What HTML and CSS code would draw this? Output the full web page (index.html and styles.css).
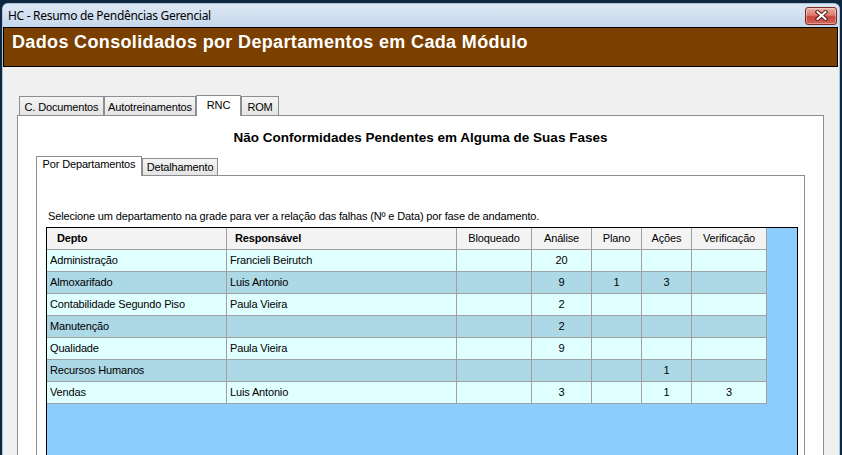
FILE: index.html
```html
<!DOCTYPE html>
<html lang="pt-BR">
<head>
<meta charset="utf-8">
<title>HC - Resumo de Pendências Gerencial</title>
<link rel="stylesheet" href="styles.css">
</head>
<body>
<div class="window">
  <header class="titlebar">
    <span class="caption">HC - Resumo de Pendências Gerencial</span>
    <span class="close-btn">
      <svg width="13" height="11" viewBox="0 0 13 11">
        <path d="M2.5 2 L10.5 9 M10.5 2 L2.5 9" stroke="#5a1d16" stroke-width="4" stroke-linecap="square" fill="none"/>
        <path d="M2.5 2 L10.5 9 M10.5 2 L2.5 9" stroke="#ffffff" stroke-width="2" stroke-linecap="square" fill="none"/>
      </svg>
    </span>
  </header>

  <div class="banner">Dados Consolidados por Departamentos em Cada Módulo</div>

  <main class="client">
    <nav class="tabstrip outer-strip">
      <span class="tab w-doc">C. Documentos</span>
      <span class="tab w-auto">Autotreinamentos</span>
      <span class="tab selected w-rnc">RNC</span>
      <span class="tab w-rom">ROM</span>
    </nav>

    <section class="tabpage outer-page">
      <h1 class="page-heading">Não Conformidades Pendentes em Alguma de Suas Fases</h1>

      <nav class="tabstrip inner-strip">
        <span class="tab selected w-dep">Por Departamentos</span>
        <span class="tab w-det">Detalhamento</span>
      </nav>

      <div class="tabpage inner-page">
        <p class="hint">Selecione um departamento na grade para ver a relação das falhas (Nº e Data) por fase de andamento.</p>

        <div class="grid">
          <div class="row head">
            <div class="cell left bold pad-depto">Depto</div>
            <div class="cell left bold pad-resp">Responsável</div>
            <div class="cell">Bloqueado</div>
            <div class="cell">Análise</div>
            <div class="cell">Plano</div>
            <div class="cell">Ações</div>
            <div class="cell">Verificação</div>
          </div>
          <div class="row odd">
            <div class="cell left">Administração</div>
            <div class="cell left">Francieli Beirutch</div>
            <div class="cell"></div>
            <div class="cell">20</div>
            <div class="cell"></div>
            <div class="cell"></div>
            <div class="cell"></div>
          </div>
          <div class="row even">
            <div class="cell left">Almoxarifado</div>
            <div class="cell left">Luis Antonio</div>
            <div class="cell"></div>
            <div class="cell">9</div>
            <div class="cell">1</div>
            <div class="cell">3</div>
            <div class="cell"></div>
          </div>
          <div class="row odd">
            <div class="cell left">Contabilidade Segundo Piso</div>
            <div class="cell left">Paula Vieira</div>
            <div class="cell"></div>
            <div class="cell">2</div>
            <div class="cell"></div>
            <div class="cell"></div>
            <div class="cell"></div>
          </div>
          <div class="row even">
            <div class="cell left">Manutenção</div>
            <div class="cell left"></div>
            <div class="cell"></div>
            <div class="cell">2</div>
            <div class="cell"></div>
            <div class="cell"></div>
            <div class="cell"></div>
          </div>
          <div class="row odd">
            <div class="cell left">Qualidade</div>
            <div class="cell left">Paula Vieira</div>
            <div class="cell"></div>
            <div class="cell">9</div>
            <div class="cell"></div>
            <div class="cell"></div>
            <div class="cell"></div>
          </div>
          <div class="row even">
            <div class="cell left">Recursos Humanos</div>
            <div class="cell left"></div>
            <div class="cell"></div>
            <div class="cell"></div>
            <div class="cell"></div>
            <div class="cell">1</div>
            <div class="cell"></div>
          </div>
          <div class="row odd">
            <div class="cell left">Vendas</div>
            <div class="cell left">Luis Antonio</div>
            <div class="cell"></div>
            <div class="cell">3</div>
            <div class="cell"></div>
            <div class="cell">1</div>
            <div class="cell">3</div>
          </div>
        </div>
      </div>
    </section>
  </main>
</div>
</body>
</html>
```

FILE: styles.css
```css
* {
  box-sizing: border-box;
}

html,
body {
  margin: 0;
  height: 100%;
  overflow: hidden;
}

body {
  background: #10283f;
  font-family: "Liberation Sans", Arial, sans-serif;
  font-size: 11px;
  letter-spacing: -0.15px;
  color: #000;
}

/* window frame */
.window {
  margin: 3px 2px 0 2px;
  height: 452px;
  border: 1px solid #a8c6e2;
  border-bottom: 0;
  border-radius: 6px 6px 0 0;
  background: #f0f0f0;
  display: flex;
  flex-direction: column;
  overflow: hidden;
}

.titlebar {
  flex: none;
  height: 23px;
  display: flex;
  align-items: center;
  justify-content: space-between;
  padding: 0 2px 0 5px;
  background: linear-gradient(#dde8f4, #c6d8ec);
}

.caption {
  font-family: "Noto Sans", "Open Sans", sans-serif;
  font-size: 12px;
  letter-spacing: -0.3px;
  line-height: 16px;
  color: #000;
}

.close-btn {
  width: 32px;
  height: 18px;
  display: flex;
  align-items: center;
  justify-content: center;
  border: 1px solid #7c2a22;
  border-radius: 3px;
  background: linear-gradient(#eab0a6 0%, #dc7a6c 45%, #c9443a 55%, #d2685a 100%);
  box-shadow: inset 0 0 0 1px rgba(255, 255, 255, 0.35);
}

/* brown banner under the caption */
.banner {
  flex: none;
  height: 40px;
  margin-right: 1px;
  padding: 4px 0 0 8px;
  background: #7b3f00;
  border: 1px solid #000;
  color: #fff;
  font-weight: bold;
  font-size: 18px;
  letter-spacing: 0.35px;
  line-height: 20px;
}

.client {
  flex: 1;
  padding: 28px 0 0 14px;
  display: flex;
  flex-direction: column;
  min-height: 0;
}

/* tabs */
.tabstrip {
  display: flex;
  align-items: flex-end;
  flex: none;
}

.tab {
  display: block;
  text-align: center;
  white-space: nowrap;
  border: 1px solid #8c8e94;
  border-bottom: 0;
  background: linear-gradient(#f4f4f4, #e4e4e4);
  color: #000;
}

.tab.selected {
  position: relative;
  z-index: 1;
  background: #fff;
  margin-bottom: -1px;
}

.outer-strip {
  height: 20px;
  padding-left: 2px;
}

.outer-strip .tab {
  height: 19px;
  line-height: 20px;
}

.outer-strip .tab.selected {
  height: 21px;
  line-height: 18px;
}

.w-doc { width: 85px; }
.w-auto { width: 92px; }
.w-rnc { width: 45px; }
.w-rom { width: 38px; }

.tabpage {
  background: #fff;
  border: 1px solid #8c8e94;
  border-bottom: 0;
}

.outer-page {
  width: 807px;
  flex: 1;
  display: flex;
  flex-direction: column;
  min-height: 0;
}

.page-heading {
  margin: 14px 0 0 0;
  font-size: 13.5px;
  letter-spacing: 0;
  line-height: 15px;
  font-weight: bold;
  text-align: center;
}

.inner-strip {
  height: 19px;
  margin: 11px 0 0 18px;
}

.inner-strip .tab {
  height: 17px;
  line-height: 17px;
}

.inner-strip .tab.selected {
  height: 20px;
  line-height: 15px;
}

.w-dep { width: 106px; }
.w-det { width: 76px; }

.inner-page {
  width: 769px;
  margin-left: 18px;
  flex: 1;
  display: flex;
  flex-direction: column;
  min-height: 0;
  padding: 34px 0 0 11px;
}

.hint {
  margin: 0;
  font-size: 11px;
  line-height: 13px;
}

/* data grid */
.grid {
  margin: 4px 0 0 -2px;
  width: 752px;
  flex: 1;
  border: 1px solid #000;
  border-bottom: 0;
  background: #8ccdfd;
}

.row {
  display: grid;
  grid-template-columns: 180px 230px 75px 60px 50px 50px 75px;
  width: 720px;
}

.cell {
  height: 22px;
  line-height: 21px;
  border-right: 1px solid #a0a0a0;
  border-bottom: 1px solid #a0a0a0;
  text-align: center;
  padding: 0 3px;
  white-space: nowrap;
  overflow: hidden;
}

.cell.left {
  text-align: left;
}

.cell.bold {
  font-weight: bold;
}

.pad-depto { padding-left: 10px; }
.pad-resp { padding-left: 8px; }

.row.head .cell {
  background: #f3f3f3;
}

.row.odd .cell {
  background: #e0ffff;
}

.row.even .cell {
  background: #add8e6;
}
```
